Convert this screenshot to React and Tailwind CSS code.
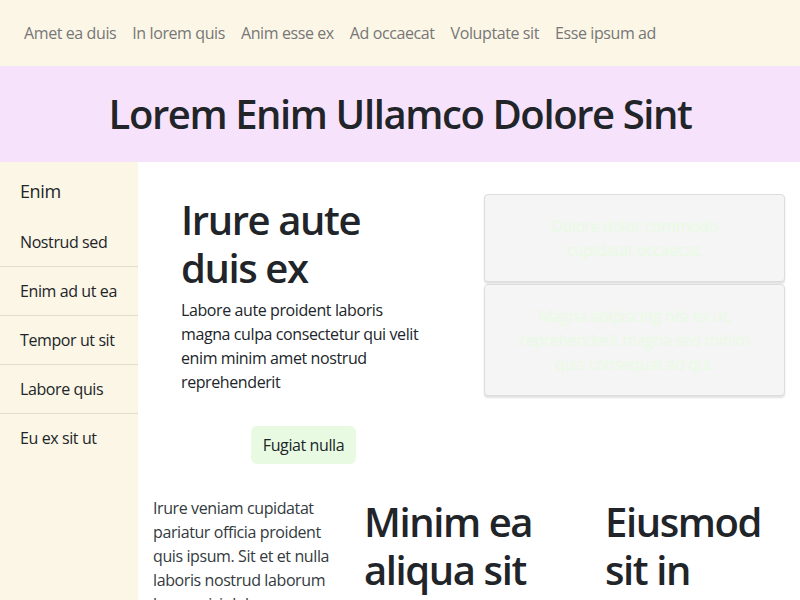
import { useState } from 'react';

const navLinks = ['Amet ea duis', 'In lorem quis', 'Anim esse ex', 'Ad occaecat', 'Voluptate sit', 'Esse ipsum ad'];
const sideItems = ['Nostrud sed', 'Enim ad ut ea', 'Tempor ut sit', 'Labore quis', 'Eu ex sit ut'];

const font = { fontFamily: '"Segoe UI", "Open Sans", "Noto Sans", sans-serif' };

const App = () => {
  const [active, setActive] = useState(null);

  return (
    <div className="min-h-screen bg-white text-[#212529] tracking-[-0.025em]" style={font}>
      {/* Barre de navigation */}
      <nav className="h-[66px] bg-[#fcf6e6] flex items-center px-4">
        {navLinks.map((label) => (
          <a
            key={label}
            href="#"
            onClick={(e) => { e.preventDefault(); setActive(label); }}
            className={`px-2 text-base leading-6 whitespace-nowrap ${active === label ? 'text-[#333]' : 'text-[#777]'}`}
          >
            {label}
          </a>
        ))}
      </nav>

      <header className="h-24 bg-[#f6e3fb] flex items-center justify-center">
        <h1 className="text-[40px] leading-[48px] font-semibold tracking-[-0.035em]">Lorem Enim Ullamco Dolore Sint</h1>
      </header>

      <div className="flex">
        <aside className="w-[138px] shrink-0 bg-[#fcf6e6] min-h-[600px]">
          <div className="h-14 flex items-center px-5 text-lg pt-[2px]">Enim</div>
          <ul>
            {sideItems.map((item) => (
              <li key={item} className="px-5 py-3 leading-6 border-b border-[#e2dccc] last:border-b-0 whitespace-nowrap">
                {item}
              </li>
            ))}
          </ul>
        </aside>

        <main className="flex-1">
          <section className="flex pt-8">
            <div className="ml-[27px] w-[277px] pl-4 pt-[2px]">
              <h2 className="text-[40px] leading-[48px] font-semibold tracking-[-0.035em]">
                Irure aute<br />duis ex
              </h2>
              <p className="mt-[6px] text-base leading-6 whitespace-nowrap">
                Labore aute proident laboris<br />
                magna culpa consectetur qui velit<br />
                enim minim amet nostrud<br />
                reprehenderit
              </p>
              <div className="flex justify-center pr-4 mt-8">
                <button className="h-[38px] px-3 rounded-md bg-[#e8fbe2] text-base">Fugiat nulla</button>
              </div>
            </div>

            <div className="ml-[42px] w-[301px] flex flex-col gap-[2px]">
              <div className="bg-[#f5f5f5] border border-[#dddddd] rounded shadow-[0_2px_2px_rgba(0,0,0,0.12)] py-[19px] text-center leading-6 text-[#e8fbe2] whitespace-nowrap">
                Dolore dolor commodo<br />cupidatat occaecat.
              </div>
              <div className="bg-[#f5f5f5] border border-[#dddddd] rounded shadow-[0_2px_2px_rgba(0,0,0,0.12)] py-[19px] text-center leading-6 text-[#e8fbe2] whitespace-nowrap">
                Magna adipiscing nisi ex ut,<br />reprehenderit magna sed minim<br />quis consequat ad qui.
              </div>
            </div>
          </section>

          <section className="flex pt-8">
            <p className="ml-[15px] w-[211px] text-base leading-6 text-[#343a40] whitespace-nowrap">
              Irure veniam cupidatat<br />
              pariatur officia proident<br />
              quis ipsum. Sit et et nulla<br />
              laboris nostrud laborum<br />
              lorem nisi dolore.
            </p>
            <h2 className="w-[241px] text-[40px] leading-[48px] font-semibold tracking-[-0.035em] pt-[2px]">
              Minim ea<br />aliqua sit
            </h2>
            <h2 className="text-[40px] leading-[48px] font-semibold tracking-[-0.035em] pt-[2px]">
              Eiusmod<br />sit in
            </h2>
          </section>
        </main>
      </div>
    </div>
  );
};

export default App;
